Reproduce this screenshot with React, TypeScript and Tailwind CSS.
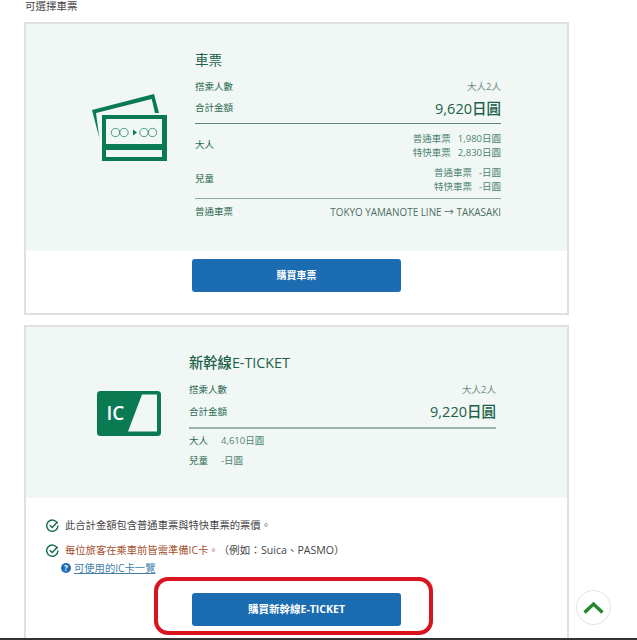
import React from 'react';

const font = { fontFamily: '"Open Sans", "Noto Sans CJK TC", sans-serif' };

function TicketIcon() {
  return (
    <svg width="76" height="69" viewBox="0 0 76 69" className="block">
      <polygon points="0,17 62,1 67,20 63,20 59.7,6 4,20 7.3,45" fill="#0a7a52" />
      <path fillRule="evenodd" d="M10 22H75V68H10ZM14 26V51H70V26ZM14 57V64H70V57Z" fill="#0a7a52" />
      <g fill="none" stroke="#0a7a52" strokeWidth="0.7">
        <circle cx="23.5" cy="39.5" r="4.2" />
        <circle cx="32" cy="39.5" r="4.2" />
        <circle cx="52" cy="39.5" r="4.2" />
        <circle cx="60.5" cy="39.5" r="4.2" />
      </g>
      <polygon points="41,36.5 45,39.5 41,42.5" fill="#0a7a52" />
    </svg>
  );
}

function IcIcon() {
  return (
    <svg width="64" height="45" viewBox="0 0 64 45" className="block">
      <rect width="64" height="45" rx="3.5" fill="#0a7a52" />
      <polygon points="31,40.5 45,3.5 60,3.5 60,40.5" fill="#f1f7f4" />
      <text x="9.5" y="29" fontSize="19" fontWeight="600" fill="#ffffff" fontFamily='"Open Sans", sans-serif'>
        IC
      </text>
    </svg>
  );
}

function CheckIcon() {
  return (
    <svg width="13" height="13" viewBox="0 0 13 13" fill="none" stroke="#14694a" strokeWidth="1.4" className="shrink-0">
      <path d="M11.4 4.3A5.6 5.6 0 1 0 11.9 6.5" />
      <path d="M3.8 6.2 6.2 8.6 11.6 3" />
    </svg>
  );
}

function Row({ left, right, big }: { left: string; right: string; big?: boolean }) {
  return (
    <div className="flex items-center justify-between">
      <span className="text-[9.5px] text-[#2b6b55]">{left}</span>
      <span className={big ? 'text-[14.5px] font-medium text-[#1d6148]' : 'text-[9.5px] text-[#6d8a80]'}>{right}</span>
    </div>
  );
}

function FareRow({ label, rows, height }: { label: string; rows: string[][]; height: string }) {
  return (
    <div className={`flex items-center justify-between ${height}`}>
      <span className="text-[9.5px] text-[#2b6b55]">{label}</span>
      <div className="flex flex-col gap-[1px] text-[9.5px] leading-[13px] text-[#4d8371]">
        {rows.map((r) => (
          <div key={r[0]} className="flex justify-end gap-[7px]">
            <span>{r[0]}</span>
            <span>{r[1]}</span>
          </div>
        ))}
      </div>
    </div>
  );
}

export default function App() {
  return (
    <div lang="zh-TW" className="relative h-[640px] w-[637px] overflow-hidden bg-white" style={font}>
      <p className="h-[22px] pl-[25px] text-[10.5px] leading-[13px] text-[#444]">可選擇車票</p>

      {/* Normal ticket */}
      <div className="ml-[24px] h-[293px] w-[545px] border-2 border-[#dfe1e0]">
        <div className="flex h-[227px] bg-[#f1f7f4]">
          <div className="ml-[66px] mt-[69px] w-[103px]">
            <TicketIcon />
          </div>
          <div className="w-[306px] pt-[26px]">
            <h2 className="mb-[7px] text-[13.5px] leading-[20px] text-[#1d6148]">車票</h2>
            <div className="flex h-[21px] flex-col justify-center">
              <Row left="搭乘人數" right="大人2人" />
            </div>
            <div className="flex h-[26px] flex-col justify-center border-b border-[#5d8b7b] pb-[4px]">
              <Row left="合計金額" right="9,620日圓" big />
            </div>
            <FareRow
              label="大人"
              height="h-[41px] pt-[2px]"
              rows={[
                ['普通車票', '1,980日圓'],
                ['特快車票', '2,830日圓'],
              ]}
            />
            <FareRow
              label="兒童"
              height="h-[34px] border-b border-[#8aa99e] pb-[5px]"
              rows={[
                ['普通車票', '-日圓'],
                ['特快車票', '-日圓'],
              ]}
            />
            <div className="flex h-[26px] items-center justify-between text-[9.5px] text-[#2b6b55]">
              <span>普通車票</span>
              <span className="text-[9.9px] text-[#4a6e62]">TOKYO YAMANOTE LINE → TAKASAKI</span>
            </div>
          </div>
        </div>
        <div className="flex pl-[166px] pt-[8px]">
          <button className="h-[33px] w-[209px] rounded-[3px] bg-[#1b6cb0] text-[10px] font-bold text-white">購買車票</button>
        </div>
      </div>

      {/* Shinkansen e-ticket */}
      <div className="ml-[24px] mt-[10px] h-[321px] w-[545px] border-2 border-[#dfe1e0]">
        <div className="flex h-[171px] bg-[#f1f7f4]">
          <div className="ml-[71px] mt-[64px] w-[92px]">
            <IcIcon />
          </div>
          <div className="w-[307px] pt-[26px]">
            <h2 className="mb-[7px] text-[14.3px] font-medium leading-[20px] text-[#1d6148]">新幹線E-TICKET</h2>
            <div className="flex h-[20px] flex-col justify-center">
              <Row left="搭乘人數" right="大人2人" />
            </div>
            <div className="flex h-[29px] flex-col justify-center border-b-2 border-[#9ab5ab] pb-[3px]">
              <Row left="合計金額" right="9,220日圓" big />
            </div>
            <div className="mt-[5px] flex flex-col gap-[6px] text-[9.5px] leading-[14px] text-[#2b6b55]">
              <div className="flex gap-[13px]">
                <span>大人</span>
                <span className="text-[#4d8371]">4,610日圓</span>
              </div>
              <div className="flex gap-[13px]">
                <span>兒童</span>
                <span className="text-[#4d8371]">-日圓</span>
              </div>
            </div>
          </div>
        </div>
        <div className="pl-[20px] pt-[20px] text-[10.3px] leading-[14px] text-[#444] [text-spacing-trim:space-all]">
          <div className="flex items-center gap-[6px]">
            <CheckIcon />
            <span>此合計金額包含普通車票與特快車票的票價。</span>
          </div>
          <div className="mt-[11px] flex items-center gap-[6px]">
            <CheckIcon />
            <span>
              <span className="text-[#a4502d]">每位旅客在乘車前皆需準備IC卡。</span>
              <span className="text-[10.6px]">（例如：Suica、PASMO）</span>
            </span>
          </div>
          <div className="mt-[4px] flex items-center gap-[3px] pl-[15px]">
            <span className="flex h-[10px] w-[10px] items-center justify-center rounded-full bg-[#1b6cb0] text-[8px] font-bold text-white">?</span>
            <a className="text-[#3f7fa8] underline">可使用的IC卡一覽</a>
          </div>
        </div>
        <div className="flex pl-[166px] pt-[18px]">
          <button className="h-[33px] w-[209px] rounded-[3px] bg-[#1b6cb0] text-[10.5px] font-bold text-white">購買新幹線E-TICKET</button>
        </div>
      </div>

      {/* Annotation drawn over the screenshot */}
      <div className="absolute left-[154px] top-[577px] h-[58px] w-[279px] rounded-[14px] border-4 border-[#d9141f]" />

      {/* Back to top */}
      <button className="absolute left-[576px] top-[590px] flex h-[35px] w-[35px] items-center justify-center rounded-full border border-[#e3e3e3] bg-white">
        <svg width="21" height="13" viewBox="0 0 21 13" fill="none" stroke="#1f8a2e" strokeWidth="3.4">
          <path d="M1.5 11.5 10.5 3 19.5 11.5" />
        </svg>
      </button>

      <div className="absolute bottom-0 left-0 h-[2px] w-full bg-[#333]" />
    </div>
  );
}
